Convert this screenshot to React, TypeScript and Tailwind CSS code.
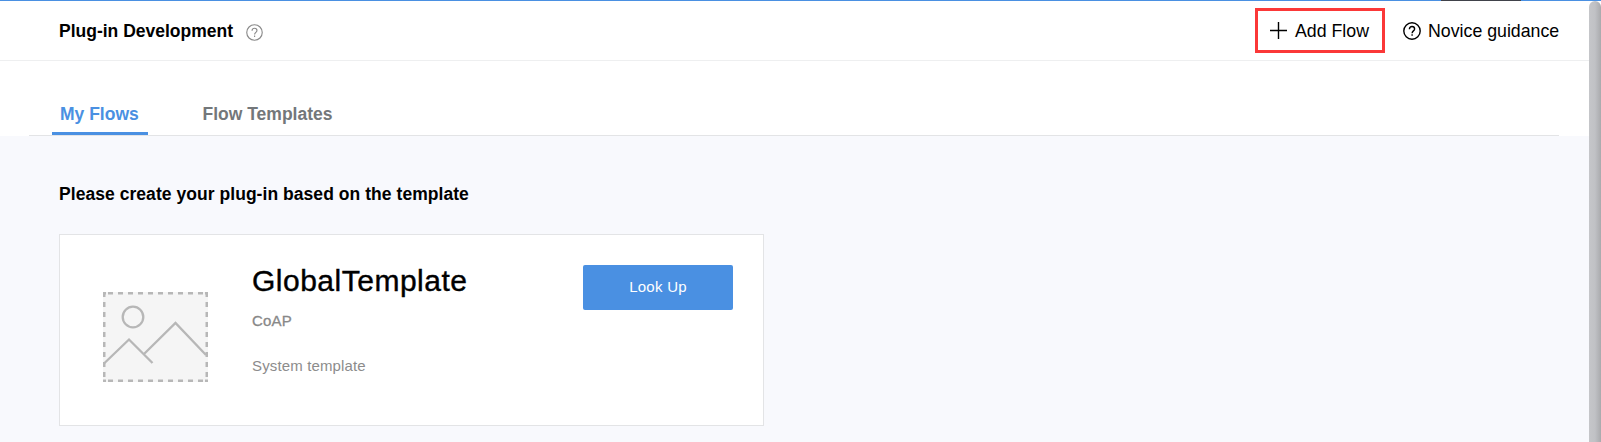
import React from "react";

function HelpIcon({ className, strokeWidth }: { className: string; strokeWidth: number }) {
  return (
    <svg viewBox="0 0 18 18" fill="none" stroke="currentColor" strokeWidth={strokeWidth} className={className}>
      <circle cx="9" cy="9" r="8.2" />
      <path d="M6.4 7.2C6.4 5.4 7.5 4.5 9 4.5s2.6.9 2.6 2.4c0 2-2.5 2-2.5 4.3" />
      <path d="M9.1 12.3v1.5" />
    </svg>
  );
}

function PlaceholderImage() {
  return (
    <svg viewBox="0 0 105 90" fill="none" stroke="#b7b7b7" className="mt-[57px] ml-[43px] h-[90px] w-[105px] shrink-0">
      <rect width="105" height="90" fill="#f5f5f5" stroke="none" />
      <path d="M0 1.25H105M0 88.75H105" strokeWidth="2.5" strokeDasharray="5 5" strokeDashoffset="5" />
      <path d="M0 1.25H3M102 1.25H105M0 88.75H3M102 88.75H105" strokeWidth="2.5" />
      <path d="M1.25 0V90M103.75 0V90" strokeWidth="2.5" strokeDasharray="5 5" />
      <circle cx="30" cy="25" r="10.3" strokeWidth="2.3" />
      <path d="M1 71.5L26 47.5L49.5 71M41 62L72.5 31L103 63" strokeWidth="2.3" />
    </svg>
  );
}

export default function App() {
  return (
    <div className="flex h-[442px] w-[1601px] flex-col overflow-hidden bg-white font-['Liberation_Sans',Arial,sans-serif] text-black">
      <div className="flex h-px shrink-0 justify-end bg-[#4a90e2] pr-20">
        <div className="h-px w-20 bg-[#40424a]" />
      </div>
      <div className="flex min-h-0 flex-1">
        <main className="flex w-[1589px] flex-col">
          <header className="flex h-[60px] shrink-0 items-center justify-between border-b border-[#eeeff0] pr-[30px] pl-[59px]">
            <div className="flex items-center">
              <h1 className="w-[187px] text-[17.5px] leading-6 font-bold whitespace-nowrap">Plug-in Development</h1>
              <HelpIcon className="mt-[3px] h-[17px] w-[17px] text-[#8a8a8a]" strokeWidth={1.2} />
            </div>
            <div className="flex items-center">
              <button className="flex h-[45px] w-[130px] items-center border-[3px] border-[#fb3838] pl-3 text-[17.75px] leading-6 whitespace-nowrap">
                <svg viewBox="0 0 17 17" stroke="currentColor" strokeWidth="1.4" className="mr-2 h-[17px] w-[17px] shrink-0">
                  <path d="M8.5 0V17M0 8.5H17" />
                </svg>
                <span>Add Flow</span>
              </button>
              <button className="ml-[18px] flex w-[156px] items-center text-[17.75px] leading-6 whitespace-nowrap">
                <HelpIcon className="mr-[7px] h-[18px] w-[18px] shrink-0" strokeWidth={1.4} />
                <span>Novice guidance</span>
              </button>
            </div>
          </header>
          <nav className="mr-[30px] ml-[29px] flex h-[75px] shrink-0 items-end border-b border-[#e3e4e6] pl-[23px] text-[17.5px] leading-6 font-bold">
            <div className="h-[33px] w-24 border-b-[3px] border-[#4a90e2] pl-2 whitespace-nowrap text-[#4a90e2]">My Flows</div>
            <div className="ml-[54.5px] h-[33px] whitespace-nowrap text-[#73777a]">Flow Templates</div>
          </nav>
          <section className="flex-1 bg-[#f8f9fd] pt-[46px] pl-[59px]">
            <h2 className="text-[17.5px] leading-6 font-bold tracking-[0.05px] whitespace-nowrap">Please create your plug-in based on the template</h2>
            <div className="mt-7 flex h-[192px] w-[705px] border border-[#e3e4e6] bg-white">
              <PlaceholderImage />
              <div className="ml-11 w-[331px] pt-7 whitespace-nowrap">
                <h3 className="text-[30px] leading-9 tracking-[0.5px] [-webkit-text-stroke:0.4px_black]">GlobalTemplate</h3>
                <p className="mt-3 text-[15px] leading-5 tracking-[0.2px] text-[#888] [-webkit-text-stroke:0.3px_#888]">CoAP</p>
                <p className="mt-[25px] text-[15px] leading-5 tracking-[0.14px] text-[#8c8c8c]">System template</p>
              </div>
              <button className="mt-[30px] flex h-[45px] w-[150px] justify-center rounded-xs bg-[#4a90e2] pt-3 text-[15px] leading-5 tracking-[0.25px] text-white">Look Up</button>
            </div>
          </section>
        </main>
        <div className="w-3 rounded-t-full bg-linear-to-r from-[#c5c6c9] via-[#c0c1c5] to-[#a9aaad]" />
      </div>
    </div>
  );
}
